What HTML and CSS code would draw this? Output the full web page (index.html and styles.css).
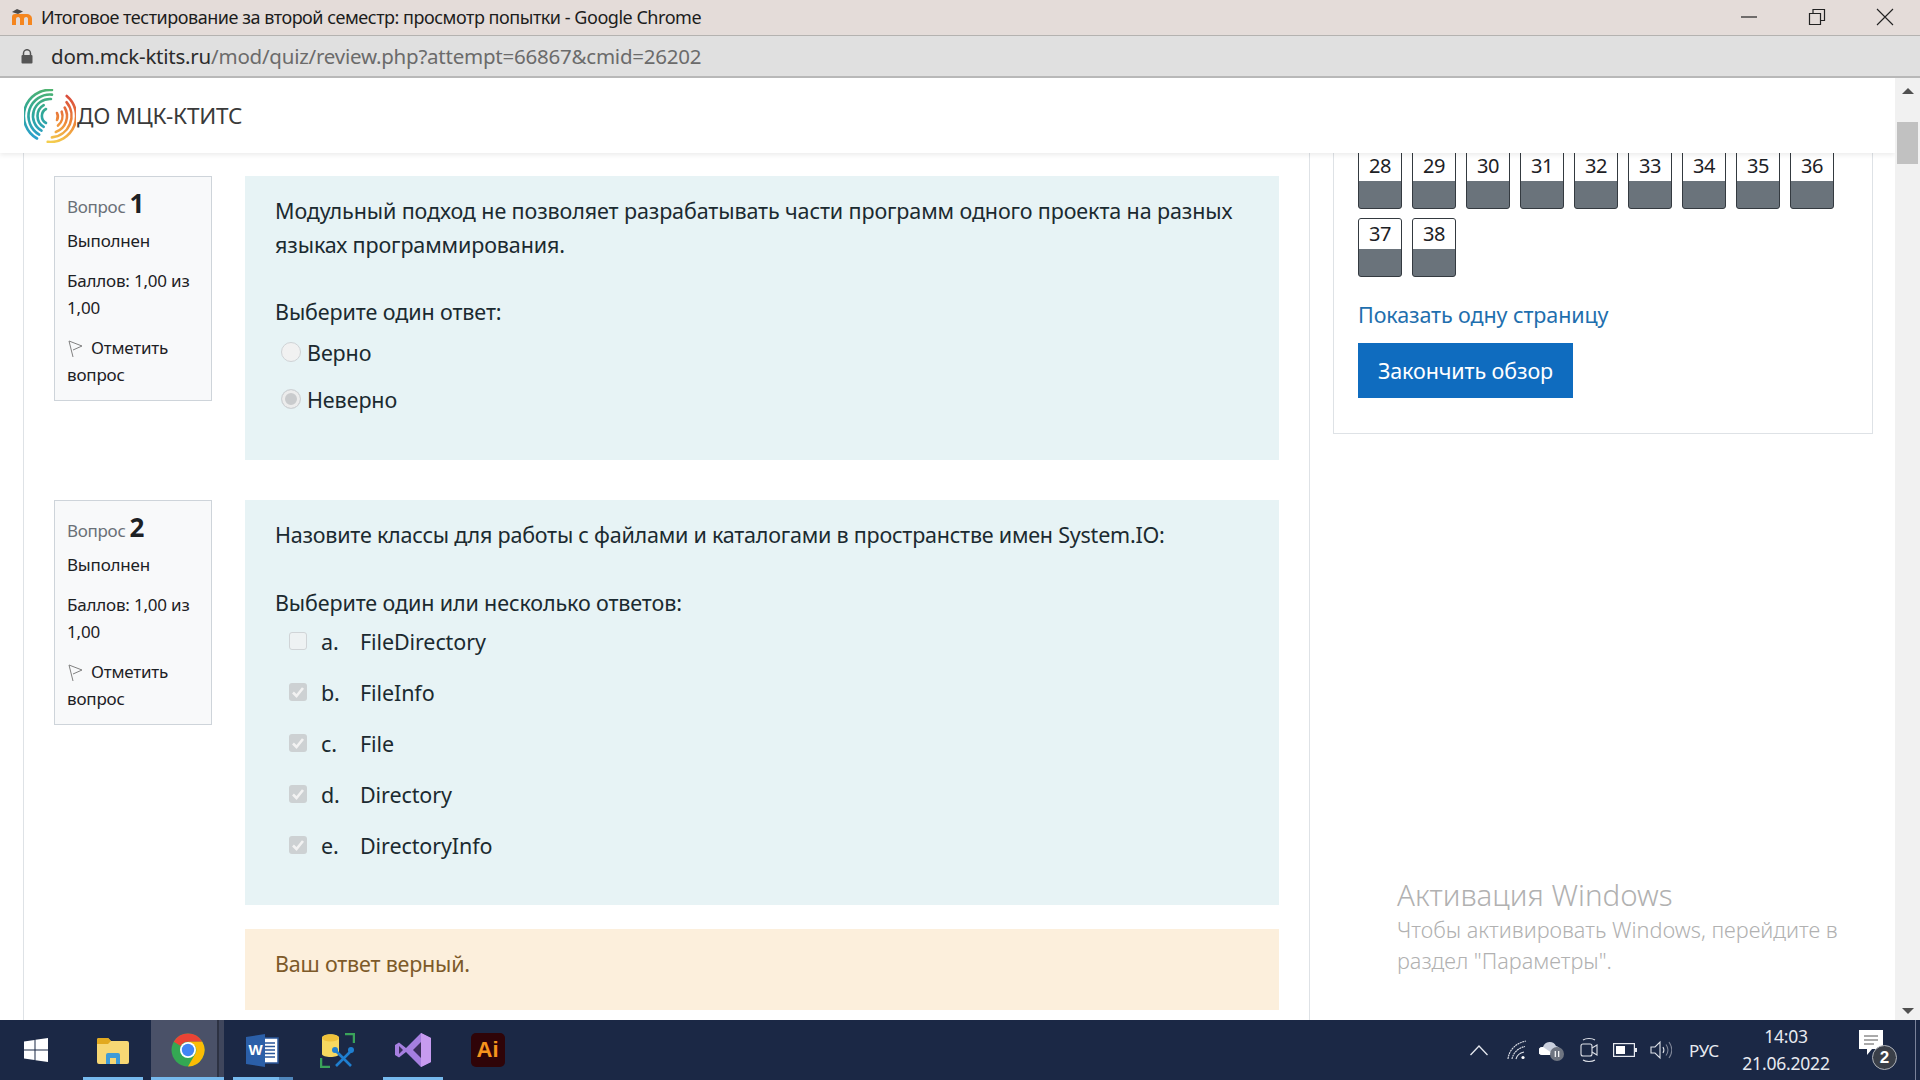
FILE: index.html
```html
<!DOCTYPE html>
<html lang="ru">
<head>
<meta charset="utf-8">
<title>Итоговое тестирование</title>
<link rel="stylesheet" href="styles.css">
</head>
<body>
<div class="screen">
  <div class="titlebar">
    <svg class="favicon" viewBox="0 0 22 16" width="22" height="16">
      <path d="M1 16V8c0-2 1-3 3-3h11c4 0 6 2 6 5v6h-4v-6c0-1-.6-2-1.800-2S13 8.900 13 10v6H9v-6c0-1-.6-2-1.800-2S5 8.900 5 10v6z" fill="#f5861f"/>
      <path d="M1 3l5-3 6 2.500-5 2.500z" fill="#4a4a4a"/>
    </svg>
    <span class="title-text">Итоговое тестирование за второй семестр: просмотр попытки - Google Chrome</span>
    <div class="winctl">
      <svg width="18" height="18" viewBox="0 0 18 18"><path d="M1 9h16" stroke="#222" stroke-width="1.200"/></svg>
      <svg width="18" height="18" viewBox="0 0 18 18"><path d="M1.500 5.500h11v11h-11zM5 5.500V1.500h11.500v11h-4" fill="none" stroke="#222" stroke-width="1.200"/></svg>
      <svg width="18" height="18" viewBox="0 0 18 18"><path d="M1 1l16 16M17 1L1 17" stroke="#222" stroke-width="1.100"/></svg>
    </div>
  </div>
  <div class="addressbar">
    <svg class="lock" viewBox="0 0 12 15" width="12" height="15"><path d="M2.500 6V4.200a3.500 3.500 0 0 1 7 0V6" fill="none" stroke="#555" stroke-width="1.500"/><rect x="0.500" y="6" width="11" height="8.500" rx="1" fill="#555"/></svg>
    <span class="url"><span class="url-host">dom.mck-ktits.ru</span>/mod/quiz/review.php?attempt=66867&amp;cmid=26202</span>
  </div>
  <div class="viewport">
    <div class="page">
      <header class="siteheader">
        <svg class="logo" viewBox="0 0 52 54" width="52" height="54">
          <defs>
            <linearGradient id="lg1" gradientUnits="userSpaceOnUse" x1="26" y1="0" x2="18" y2="52"><stop offset="0" stop-color="#4fb36f"/><stop offset=".5" stop-color="#2fa79a"/><stop offset="1" stop-color="#2b9fd0"/></linearGradient>
            <linearGradient id="lg2" gradientUnits="userSpaceOnUse" x1="40" y1="4" x2="28" y2="54"><stop offset="0" stop-color="#d8483c"/><stop offset=".55" stop-color="#ee8a3a"/><stop offset="1" stop-color="#f4cf4e"/></linearGradient>
          </defs>
          <g fill="none" stroke="url(#lg1)" stroke-width="2.600" stroke-linecap="round">
            <path d="M28 1A26 26 0 0 0 13 49.500"/>
            <path d="M28 5.600A21.500 21.500 0 0 0 15.200 45.600"/>
            <path d="M27 10A17 17 0 0 0 17.500 41.700"/>
            <path d="M19.700 16.200A12.500 12.500 0 0 0 19.700 37.800"/>
            <path d="M22 20A8 8 0 0 0 22 34"/>
          </g>
          <g fill="none" stroke="url(#lg2)" stroke-width="2.600" stroke-linecap="round">
            <path d="M42.700 7A26 26 0 0 1 23.700 52.900"/>
            <path d="M42.500 13.200A21.500 21.500 0 0 1 27.900 48.400"/>
            <path d="M40.700 18.500A17 17 0 0 1 31.800 43"/>
            <path d="M37.700 22.700A12.500 12.500 0 0 1 34 36.600"/>
            <path d="M33 24A8 8 0 0 1 33 31"/>
          </g>
        </svg>
        <span class="sitename">ДО МЦК-КТИТС</span>
      </header>
      <div class="columns">
        <main class="maincol">
          <section class="que">
            <aside class="info">
              <div class="qno">Вопрос <b>1</b></div>
              <div class="state">Выполнен</div>
              <div class="grade">Баллов: 1,00 из 1,00</div>
              <div class="flagq"><svg class="flag" viewBox="0 0 15 18" width="15" height="18"><path d="M1 1l13 5-9 4M1 1l4 16" fill="none" stroke="#808080" stroke-width="1"/></svg>Отметить вопрос</div>
            </aside>
            <div class="qbody q1">
              <p class="qtext">Модульный подход не позволяет разрабатывать части программ одного проекта на разных языках программирования.</p>
              <p class="prompt">Выберите один ответ:</p>
              <div class="radio"><span class="rad"></span>Верно</div>
              <div class="radio"><span class="rad on"></span>Неверно</div>
            </div>
          </section>
          <section class="que">
            <aside class="info">
              <div class="qno">Вопрос <b>2</b></div>
              <div class="state">Выполнен</div>
              <div class="grade">Баллов: 1,00 из 1,00</div>
              <div class="flagq"><svg class="flag" viewBox="0 0 15 18" width="15" height="18"><path d="M1 1l13 5-9 4M1 1l4 16" fill="none" stroke="#808080" stroke-width="1"/></svg>Отметить вопрос</div>
            </aside>
            <div class="qright">
              <div class="qbody q2">
                <p class="qtext">Назовите классы для работы с файлами и каталогами в пространстве имен System.IO:</p>
                <p class="prompt">Выберите один или несколько ответов:</p>
                <div class="opt"><span class="chk"></span><span class="optl">a.</span>FileDirectory</div>
                <div class="opt"><span class="chk on"><svg viewBox="0 0 18 18" width="18" height="18"><path d="M4 9.500l3.500 3.500L14 5" fill="none" stroke="#f2f2f2" stroke-width="2.600"/></svg></span><span class="optl">b.</span>FileInfo</div>
                <div class="opt"><span class="chk on"><svg viewBox="0 0 18 18" width="18" height="18"><path d="M4 9.500l3.500 3.500L14 5" fill="none" stroke="#f2f2f2" stroke-width="2.600"/></svg></span><span class="optl">c.</span>File</div>
                <div class="opt"><span class="chk on"><svg viewBox="0 0 18 18" width="18" height="18"><path d="M4 9.500l3.500 3.500L14 5" fill="none" stroke="#f2f2f2" stroke-width="2.600"/></svg></span><span class="optl">d.</span>Directory</div>
                <div class="opt"><span class="chk on"><svg viewBox="0 0 18 18" width="18" height="18"><path d="M4 9.500l3.500 3.500L14 5" fill="none" stroke="#f2f2f2" stroke-width="2.600"/></svg></span><span class="optl">e.</span>DirectoryInfo</div>
              </div>
              <div class="feedback">Ваш ответ верный.</div>
            </div>
          </section>
        </main>
        <aside class="sidecol">
          <div class="navblock">
            <div class="qgrid">
              <div class="qbtn"><span>28</span></div><div class="qbtn"><span>29</span></div><div class="qbtn"><span>30</span></div>
              <div class="qbtn"><span>31</span></div><div class="qbtn"><span>32</span></div><div class="qbtn"><span>33</span></div>
              <div class="qbtn"><span>34</span></div><div class="qbtn"><span>35</span></div><div class="qbtn"><span>36</span></div>
              <div class="qbtn"><span>37</span></div><div class="qbtn"><span>38</span></div>
            </div>
            <a class="onepage">Показать одну страницу</a>
            <a class="finish">Закончить обзор</a>
          </div>
        </aside>
      </div>
      <div class="activation">
        <div class="act-h">Активация Windows</div>
        <div class="act-s">Чтобы активировать Windows, перейдите в раздел "Параметры".</div>
      </div>
    </div>
    <div class="scrollbar">
      <span class="arrow up"></span>
      <span class="thumb"></span>
      <span class="arrow down"></span>
    </div>
  </div>
  <footer class="taskbar">
    <div class="tb-slot start">
      <svg width="24" height="24" viewBox="0 0 24 24"><path d="M0 3.500l10.500-1.500v9.500H0zM11.500 1.800L24 0v11.500H11.500zM0 12.500h10.500V22L0 20.500zM11.500 12.500H24V24l-12.500-1.800z" fill="#fff"/></svg>
    </div>
    <div class="tb-slot run">
      <svg width="34" height="28" viewBox="0 0 34 28"><path d="M1 4a2 2 0 0 1 2-2h9l3 3h16a2 2 0 0 1 2 2v19a2 2 0 0 1-2 2H3a2 2 0 0 1-2-2z" fill="#f7d774"/><path d="M1 4a2 2 0 0 1 2-2h9l3 3-3 3H1z" fill="#e2a91f"/><path d="M10 28v-9a2 2 0 0 1 2-2h10a2 2 0 0 1 2 2v9h-4v-6h-6v6z" fill="#3f9bd8"/></svg>
    </div>
    <div class="tb-slot active">
      <svg width="34" height="34" viewBox="0 0 34 34">
        <circle cx="17" cy="17" r="16.500" fill="#34a853"/>
        <path d="M17 .5A16.500 16.500 0 0 1 31.300 8.750H17A8.300 8.300 0 0 0 9.800 12.900L2.800 8.700A16.500 16.500 0 0 1 17 .5z" fill="#ea4335"/>
        <path d="M31.300 8.750A16.500 16.500 0 0 1 17 33.500l7.200-12.400A8.300 8.300 0 0 0 24.200 12.900L17 8.750z" fill="#fbbc05"/>
        <circle cx="17" cy="17" r="8" fill="#fff"/><circle cx="17" cy="17" r="6.200" fill="#4285f4"/>
      </svg>
    </div>
    <div class="tb-slot run multi">
      <svg width="33" height="33" viewBox="0 0 33 33"><path d="M14 4h18v25H14z" fill="#fff" stroke="#2b579a" stroke-width="1.500"/><path d="M19 9h10M19 12.500h10M19 16h10M19 19.500h10M19 23h10" stroke="#2b579a" stroke-width="1.500"/><path d="M0 3l19-3v33L0 30z" fill="#2b5fa8"/><text x="9.500" y="21" class="wordw">W</text></svg>
    </div>
    <div class="tb-slot">
      <svg width="35" height="35" viewBox="0 0 35 35"><path d="M2 5c0-5 17-5 17 0v16c0 4-17 4-17 0z" fill="#f6d860"/><ellipse cx="10.500" cy="5" rx="8.500" ry="3.500" fill="#efc13a"/><path d="M25 1h9v9M1 25v9h9" fill="none" stroke="#3aa35a" stroke-width="2.500"/><path d="M15 17l16 16M32 17L16 33" stroke="#1f7fd0" stroke-width="2.600"/><circle cx="15" cy="17" r="3" fill="#1f7fd0"/><circle cx="31" cy="17" r="3" fill="#1f7fd0"/></svg>
    </div>
    <div class="tb-slot run">
      <svg width="36" height="36" viewBox="0 0 36 36"><path d="M26 1l10 5v24l-10 5-15-15-7 5.500-4-2.500V13l4-2.500 7 5.500z" fill="#a67fe0"/><path d="M26 10l-8 8 8 8z" fill="#3a2f5a"/><path d="M4 14l4 4-4 4z" fill="#3a2f5a"/><path d="M26 1l10 5v24l-10 5z" fill="#c79bf0"/></svg>
    </div>
    <div class="tb-slot">
      <div class="ai">Ai</div>
    </div>
    <div class="tray">
      <svg class="t-chev" width="20" height="12" viewBox="0 0 20 12"><path d="M1.500 11L10 2l8.500 9" fill="none" stroke="#e4e7ee" stroke-width="1.300"/></svg>
      <svg class="t-wifi" width="20" height="20" viewBox="0 0 20 20"><g fill="none" stroke="#dfe2e9" stroke-width="1.100"><path d="M1 19C2 10 9 3 19 1" stroke-dasharray="2 .6"/><path d="M5 19c1-6 6-11 13-12.500" stroke-dasharray="2 .6"/><path d="M9 19c.8-3.400 3.500-6 8-7"/></g><circle cx="16" cy="17.500" r="1.600" fill="#fff"/></svg>
      <svg class="t-cloud" width="26" height="22" viewBox="0 0 26 22"><path d="M3 16a4 4 0 0 1 1-8 7 7 0 0 1 13-1 5 5 0 0 1 2 9z" fill="#c9cfdc"/><path d="M3 16a4 4 0 0 1 1-8l12 8z" fill="#fff"/><circle cx="18" cy="15" r="7" fill="#6e7480"/><path d="M16.300 12v6M19.700 12v6" stroke="#fff" stroke-width="1.200"/></svg>
      <svg class="t-cam" width="18" height="26" viewBox="0 0 18 26"><g fill="none" stroke="#dfe2e9" stroke-width="1.100"><path d="M3 3c3-2 9-2 12 0M3 23c3 2 9 2 12 0"/><rect x="1" y="7" width="11" height="12" rx="2"/><path d="M12 11l5-3v10l-5-3"/></g></svg>
      <svg class="t-batt" width="24" height="14" viewBox="0 0 24 14"><rect x=".6" y=".6" width="20.800" height="12.800" fill="none" stroke="#e6e8ee" stroke-width="1.200"/><rect x="3" y="3" width="9" height="8" fill="#fff"/><rect x="22" y="5" width="2" height="4" fill="#e6e8ee"/></svg>
      <svg class="t-spk" width="22" height="20" viewBox="0 0 22 20"><g fill="none" stroke="#dfe2e9" stroke-width="1.100"><path d="M1 7h4l5-5v16l-5-5H1z"/><path d="M13 7c1.200 2 1.200 4 0 6"/></g><g fill="none" stroke="#7e8597" stroke-width="1.100"><path d="M16 4.500c2.500 3.500 2.500 7.500 0 11M19 2c3.500 5 3.500 11 0 16"/></g></svg>
      <span class="t-lang">РУС</span>
      <div class="t-clock"><div>14:03</div><div>21.06.2022</div></div>
      <div class="t-notif">
        <svg width="26" height="28" viewBox="0 0 26 28"><path d="M0 0h24v19H13l-5 6v-6H0z" fill="#fff"/><path d="M5 6h14M5 10h14M5 14h10" stroke="#555" stroke-width="1"/></svg>
        <span class="badge">2</span>
      </div>
      <span class="t-show"></span>
    </div>
  </footer>
</div>
</body>
</html>
```

FILE: styles.css
```css
* { box-sizing: border-box; }
html, body { margin: 0; padding: 0; }
body { font-family: "Noto Sans", "Open Sans", sans-serif; color: #1d2125; }
.screen { width: 1920px; height: 1080px; display: flex; flex-direction: column; overflow: hidden; background: #fff; }

.titlebar { height: 36px; flex: none; background: #e4dcd9; border-bottom: 1px solid #b4b2b0; display: flex; align-items: center; padding: 0 0 2px 11px; }
.favicon { margin-right: 8px; }
.title-text { font-size: 18px; color: #1c1c1c; letter-spacing: -0.47px; white-space: nowrap; }
.winctl { margin-left: auto; display: flex; gap: 50px; padding-right: 26px; }

.addressbar { height: 42px; flex: none; background: #e0e0e0; border-bottom: 2px solid #b8b8b8; display: flex; align-items: center; padding-left: 21px; }
.url { margin-left: 18px; font-size: 20.500px; color: #6b6b6b; letter-spacing: -0.23px; white-space: nowrap; }
.url-host { color: #2b2b2b; }

.viewport { flex: 1; min-height: 0; display: flex; }
.page { flex: 1; min-width: 0; position: relative; display: flex; flex-direction: column; overflow: hidden; }
.scrollbar { width: 25px; flex: none; background: #f1f1f1; display: flex; flex-direction: column; align-items: center; }
.arrow { width: 0; height: 0; border-left: 6px solid transparent; border-right: 6px solid transparent; }
.arrow.up { border-bottom: 6px solid #505050; margin-top: 10px; }
.arrow.down { border-top: 6px solid #505050; margin-top: auto; margin-bottom: 6px; }
.thumb { width: 21px; height: 42px; background: #c1c1c1; margin-top: 28px; }

.siteheader { height: 75px; flex: none; background: #fff; display: flex; align-items: center; padding: 0 0 0 24px; position: relative; z-index: 2; box-shadow: 0 2px 5px rgba(0,0,0,.08); }
.logo { flex: none; margin-top: 1px; }
.sitename { font-size: 22.500px; color: #3a3a3a; margin-left: 1px; white-space: nowrap; letter-spacing: -0.2px; }

.columns { flex: 1; min-height: 0; display: flex; padding-left: 23px; }
.maincol { width: 1287px; flex: none; border-left: 1px solid #dee2e6; border-right: 1px solid #dee2e6; padding: 23px 0 0 30px; }
.sidecol { flex: 1; padding: 0 23px 0 23px; }

.que { display: flex; gap: 33px; margin-bottom: 40px; }
.info { width: 158px; flex: none; height: 225px; background: #f8f9fa; border: 1px solid #ced4da; padding: 10px 12px 0; font-size: 17px; line-height: 27px; color: #1d2125; letter-spacing: -0.2px; }
.qno { color: #6a7077; font-size: 17px; line-height: 32px; margin-bottom: 4px; letter-spacing: -0.3px; }
.qno b { color: #1d2125; font-size: 26px; font-weight: 700; }
.state { margin-bottom: 13px; }
.grade { margin-bottom: 13px; }
.flag { vertical-align: -4px; margin: 0 8px 0 1px; }

.qright { width: 1034px; flex: none; display: flex; flex-direction: column; gap: 24px; }
.qbody { width: 1034px; flex: none; background: #e7f3f5; padding: 18px 30px 0; font-size: 21.500px; line-height: 34px; color: #1b2a30; letter-spacing: -0.1px; }
.q1 { height: 284px; }
.q2 { height: 405px; width: 100%; }
.qtext { margin: 0 0 33px; }
.q1 .qtext { letter-spacing: -0.11px; }
.q2 .qtext { letter-spacing: -0.22px; margin-bottom: 33.500px; }
.prompt { margin: 0; }
.q2 .prompt { margin-bottom: -3.500px; letter-spacing: -0.12px; }
.radio { display: flex; align-items: center; height: 47px; padding-left: 33px; position: relative; margin-left: -1px; }
.rad { position: absolute; left: 7px; top: 13px; width: 20px; height: 20px; border-radius: 50%; background: #f1f1f1; border: 1px solid #cfd3d6; }
.rad.on { background: #c9cbcd; box-shadow: inset 0 0 0 3px #ececec; }
.opt { display: flex; align-items: center; height: 51px; }
.chk { width: 18px; height: 18px; margin: -2px 14px 0 14px; background: #eef2f3; border: 1.500px solid #d0d4d7; border-radius: 3px; flex: none; position: relative; }
.chk.on { background: #cdd1d3; border: 0; }
.chk svg { display: block; }
.optl { width: 39px; flex: none; }
.feedback { height: 81px; background: #fcefdc; color: #7d5a29; font-size: 21.500px; line-height: 34px; padding: 18px 30px 0; letter-spacing: -0.2px; }

.navblock { width: 540px; height: 284px; margin-top: -1px; border: 1px solid #dee2e6; border-top: 0; padding: 0 24px; }
.qgrid { display: grid; grid-template-columns: repeat(9, 44px); gap: 9px 10px; margin-top: -3px; }
.qbtn { height: 59px; border: 1px solid #343a40; border-radius: 3px; background: #6a737b; overflow: hidden; }
.qbtn span { display: block; height: 30px; background: #fff; text-align: center; font-size: 20px; line-height: 30px; color: #1d2125; letter-spacing: -0.4px; }
.onepage { display: block; margin-top: 21px; font-size: 21.500px; line-height: 34px; color: #1f6fae; letter-spacing: -0.1px; }
.finish { display: inline-block; margin-top: 11px; background: #0f6cbf; color: #fff; height: 55px; width: 215px; text-align: center; font-size: 21.500px; line-height: 55px; letter-spacing: -0.1px; }

.activation { position: absolute; left: 1397px; top: 799px; width: 470px; color: #b1b1b1; }
.act-h { font-size: 29.500px; line-height: 36px; font-weight: 300; }
.act-s { font-size: 21.700px; line-height: 31px; font-weight: 300; margin-top: 1px; }

.taskbar { height: 60px; flex: none; background: #1b2845; display: flex; align-items: center; color: #e8eaf0; }
.tb-slot { width: 75px; height: 60px; flex: none; display: flex; align-items: center; justify-content: center; position: relative; }
.tb-slot.start { padding-right: 3px; }
.tb-slot.run::after { content: ""; position: absolute; left: 8px; right: 7px; bottom: 0; height: 3px; background: #76b9ed; }
.tb-slot.multi::after { background: linear-gradient(90deg, #76b9ed 0 46px, #4f86bb 46px); }
.tb-slot.active { width: 73px; margin: 0 1px; background: linear-gradient(90deg, #4a5168 0 66px, #2d3243 66px 68px, #3f465c 68px); }
.tb-slot.active::after { content: ""; position: absolute; left: 0; right: 0; bottom: 0; height: 3px; background: #76b9ed; }
.wordw { font: 700 15px "Liberation Sans", sans-serif; fill: #fff; text-anchor: middle; }
.ai { width: 34px; height: 34px; background: #2f0408; border-radius: 5px; color: #f7941d; font: 700 22px/34px "Liberation Sans", sans-serif; text-align: center; }

.tray { flex: 1; display: flex; align-items: center; height: 60px; position: relative; }
.t-chev { margin-left: 944px; }
.t-wifi { margin-left: 18px; }
.t-cloud { margin-left: 12px; }
.t-cam { margin-left: 15px; }
.t-batt { margin-left: 15px; }
.t-spk { margin-left: 13px; }
.t-lang { margin-left: 17px; font-size: 17px; width: 40px; color: #e8eaf0; letter-spacing: -0.3px; }
.t-clock { margin-left: 7px; width: 100px; text-align: center; font-size: 17.500px; line-height: 27px; letter-spacing: -0.2px; }
.t-notif { margin-left: 23px; width: 38px; height: 40px; position: relative; }
.badge { position: absolute; right: 0; bottom: 0; width: 25px; height: 25px; border-radius: 50%; background: #3a3f48; border: 1px solid #aeb2b9; color: #fff; font: 700 17px/23px "Liberation Sans", sans-serif; text-align: center; }
.t-show { position: absolute; right: 4px; top: 0; width: 1px; height: 60px; background: #7a8299; }
```
